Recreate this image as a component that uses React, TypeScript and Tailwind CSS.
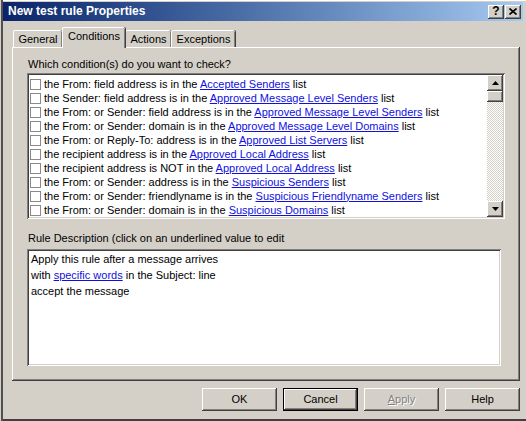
import React from "react";

const raised =
  "shadow-[inset_-1px_-1px_0_#404040,inset_1px_1px_0_#ffffff,inset_-2px_-2px_0_#808080,inset_2px_2px_0_#d4d0c8]";
const sunken =
  "shadow-[inset_1px_1px_0_#808080,inset_-1px_-1px_0_#ffffff,inset_2px_2px_0_#404040,inset_-2px_-2px_0_#d4d0c8]";

const rows: [string, string][] = [
  ["the From: field address is in the ", "Accepted Senders"],
  ["the Sender: field address is in the ", "Approved Message Level Senders"],
  ["the From: or Sender: field address is in the ", "Approved Message Level Senders"],
  ["the From: or Sender: domain is in the ", "Approved Message Level Domains"],
  ["the From: or Reply-To: address is in the ", "Approved List Servers"],
  ["the recipient address is in the ", "Approved Local Address"],
  ["the recipient address is NOT in the ", "Approved Local Address"],
  ["the From: or Sender: address is in the ", "Suspicious Senders"],
  ["the From: or Sender: friendlyname is in the ", "Suspicious Friendlyname Senders"],
  ["the From: or Sender: domain is in the ", "Suspicious Domains"],
];

function Link({ children }: { children: React.ReactNode }) {
  return <span className="text-[#1010e0] underline underline-offset-[1px]">{children}</span>;
}

function Arrow({ up }: { up?: boolean }) {
  return (
    <svg width="7" height="4" viewBox="0 0 7 4" className="block">
      {up ? <path d="M3.5 0 L7 4 L0 4 Z" fill="#000" /> : <path d="M0 0 L7 0 L3.5 4 Z" fill="#000" />}
    </svg>
  );
}

function Tab({ label, selected, w }: { label: string; selected?: boolean; w: string }) {
  if (selected) {
    return (
      <div
        className={`${w} h-[21px] -mb-[1px] relative z-10 bg-[#d4d0c8] rounded-tl-[2px] rounded-tr-[2px] border-l border-t border-white shadow-[inset_-1px_0_0_#808080,1px_0_0_#404040] flex items-start justify-center pt-[2px] text-black`}
      >
        {label}
      </div>
    );
  }
  return (
    <div
      className={`${w} h-[17px] bg-[#d4d0c8] rounded-tl-[2px] rounded-tr-[2px] border-l border-t border-white shadow-[inset_-1px_0_0_#808080,1px_0_0_#404040] flex items-start justify-center pt-[2px] text-black`}
    >
      {label}
    </div>
  );
}

function Btn({ children, def, disabled }: { children: React.ReactNode; def?: boolean; disabled?: boolean }) {
  if (def) {
    return (
      <div className="w-[75px] h-[23px] border border-black">
        <div className={`w-full h-full ${raised} flex items-center justify-center text-black`}>{children}</div>
      </div>
    );
  }
  return (
    <div
      className={`w-[75px] h-[23px] ${raised} flex items-center justify-center ${
        disabled ? "text-[#808080] [text-shadow:1px_1px_0_#ffffff]" : "text-black"
      }`}
    >
      {children}
    </div>
  );
}

export default function App() {
  return (
    <div
      className="w-[526px] h-[421px] bg-[#d4d0c8] flex flex-col text-[11px] leading-[13px] text-black overflow-hidden shadow-[inset_1px_0_0_#d4d0c8,inset_3px_0_0_#505050,inset_0_-2px_0_#404040,inset_0_1px_0_#ffffff]"
      style={{ fontFamily: '"Liberation Sans", Arial, sans-serif' }}
    >
      {/* Title bar */}
      <div className="mt-[2px] ml-[3px] mr-[3px] h-[19px] bg-linear-to-r from-[#0a246a] to-[#a6caf0] flex items-center pl-[5px] pr-[2px]">
        <span className="font-bold text-white flex-1 text-[12px]">New test rule Properties</span>
        <div className="flex gap-[1px]">
          <div className={`w-[16px] h-[14px] bg-[#d4d0c8] ${raised} flex items-center justify-center font-bold text-[12px] leading-none pb-[1px]`}>
            ?
          </div>
          <div className={`w-[16px] h-[14px] bg-[#d4d0c8] ${raised} flex items-center justify-center`}>
            <svg width="8" height="7" viewBox="0 0 8 7">
              <path d="M0.5 0.5 L7.5 6.5 M7.5 0.5 L0.5 6.5" stroke="#000" strokeWidth="1.6" />
            </svg>
          </div>
        </div>
      </div>

      {/* Tabs */}
      <div className="mt-[7px] ml-[13px] h-[19px] flex items-end">
        <Tab label="General" w="w-[49px]" />
        <Tab label="Conditions" selected w="w-[63px]" />
        <Tab label="Actions" w="w-[46px]" />
        <Tab label="Exceptions" w="w-[64px]" />
      </div>

      {/* Panel */}
      <div className={`ml-[12px] w-[508px] h-[334px] ${raised} pl-[15px] pt-[11px] flex flex-col`}>
        <div className="pl-[1px]">Which condition(s) do you want to check?</div>
        <div className={`mt-[2px] w-[478px] h-[146px] bg-white ${sunken} p-[2px] flex`}>
          <div className="flex-1 pt-[2px] pl-[1px] flex flex-col">
            {rows.map(([t, l], i) => (
              <div key={i} className="h-[14px] flex items-center whitespace-nowrap">
                <div className="w-[11px] h-[11px] border border-[#8a8a8a] bg-white mr-[3px] shrink-0" />
                <span>
                  {t}
                  <Link>{l}</Link> list
                </span>
              </div>
            ))}
          </div>
          <div className="w-[16px] flex flex-col">
            <div className={`h-[16px] bg-[#d4d0c8] ${raised} flex items-center justify-center`}>
              <Arrow up />
            </div>
            <div className={`h-[11px] bg-[#d4d0c8] ${raised}`} />
            <div className="flex-1 bg-[repeating-conic-gradient(#d4d0c8_0%_25%,#ffffff_0%_50%)] bg-[length:2px_2px]" />
            <div className={`h-[16px] bg-[#d4d0c8] ${raised} flex items-center justify-center`}>
              <Arrow />
            </div>
          </div>
        </div>
        <div className="mt-[13px] pl-[1px]">Rule Description (click on an underlined value to edit</div>
        <div className={`mt-[4px] w-[474px] h-[117px] bg-white ${sunken} pl-[4px] pt-[2px] leading-[16px]`}>
          <div>Apply this rule after a message arrives</div>
          <div>
            with <Link>specific words</Link> in the Subject: line
          </div>
          <div>accept the message</div>
        </div>
      </div>

      {/* Buttons */}
      <div className="mt-[7px] flex justify-end gap-[6px] pr-[6px]">
        <Btn>OK</Btn>
        <Btn def>Cancel</Btn>
        <Btn disabled>
          <span>
            <span className="underline">A</span>pply
          </span>
        </Btn>
        <Btn>Help</Btn>
      </div>
    </div>
  );
}
